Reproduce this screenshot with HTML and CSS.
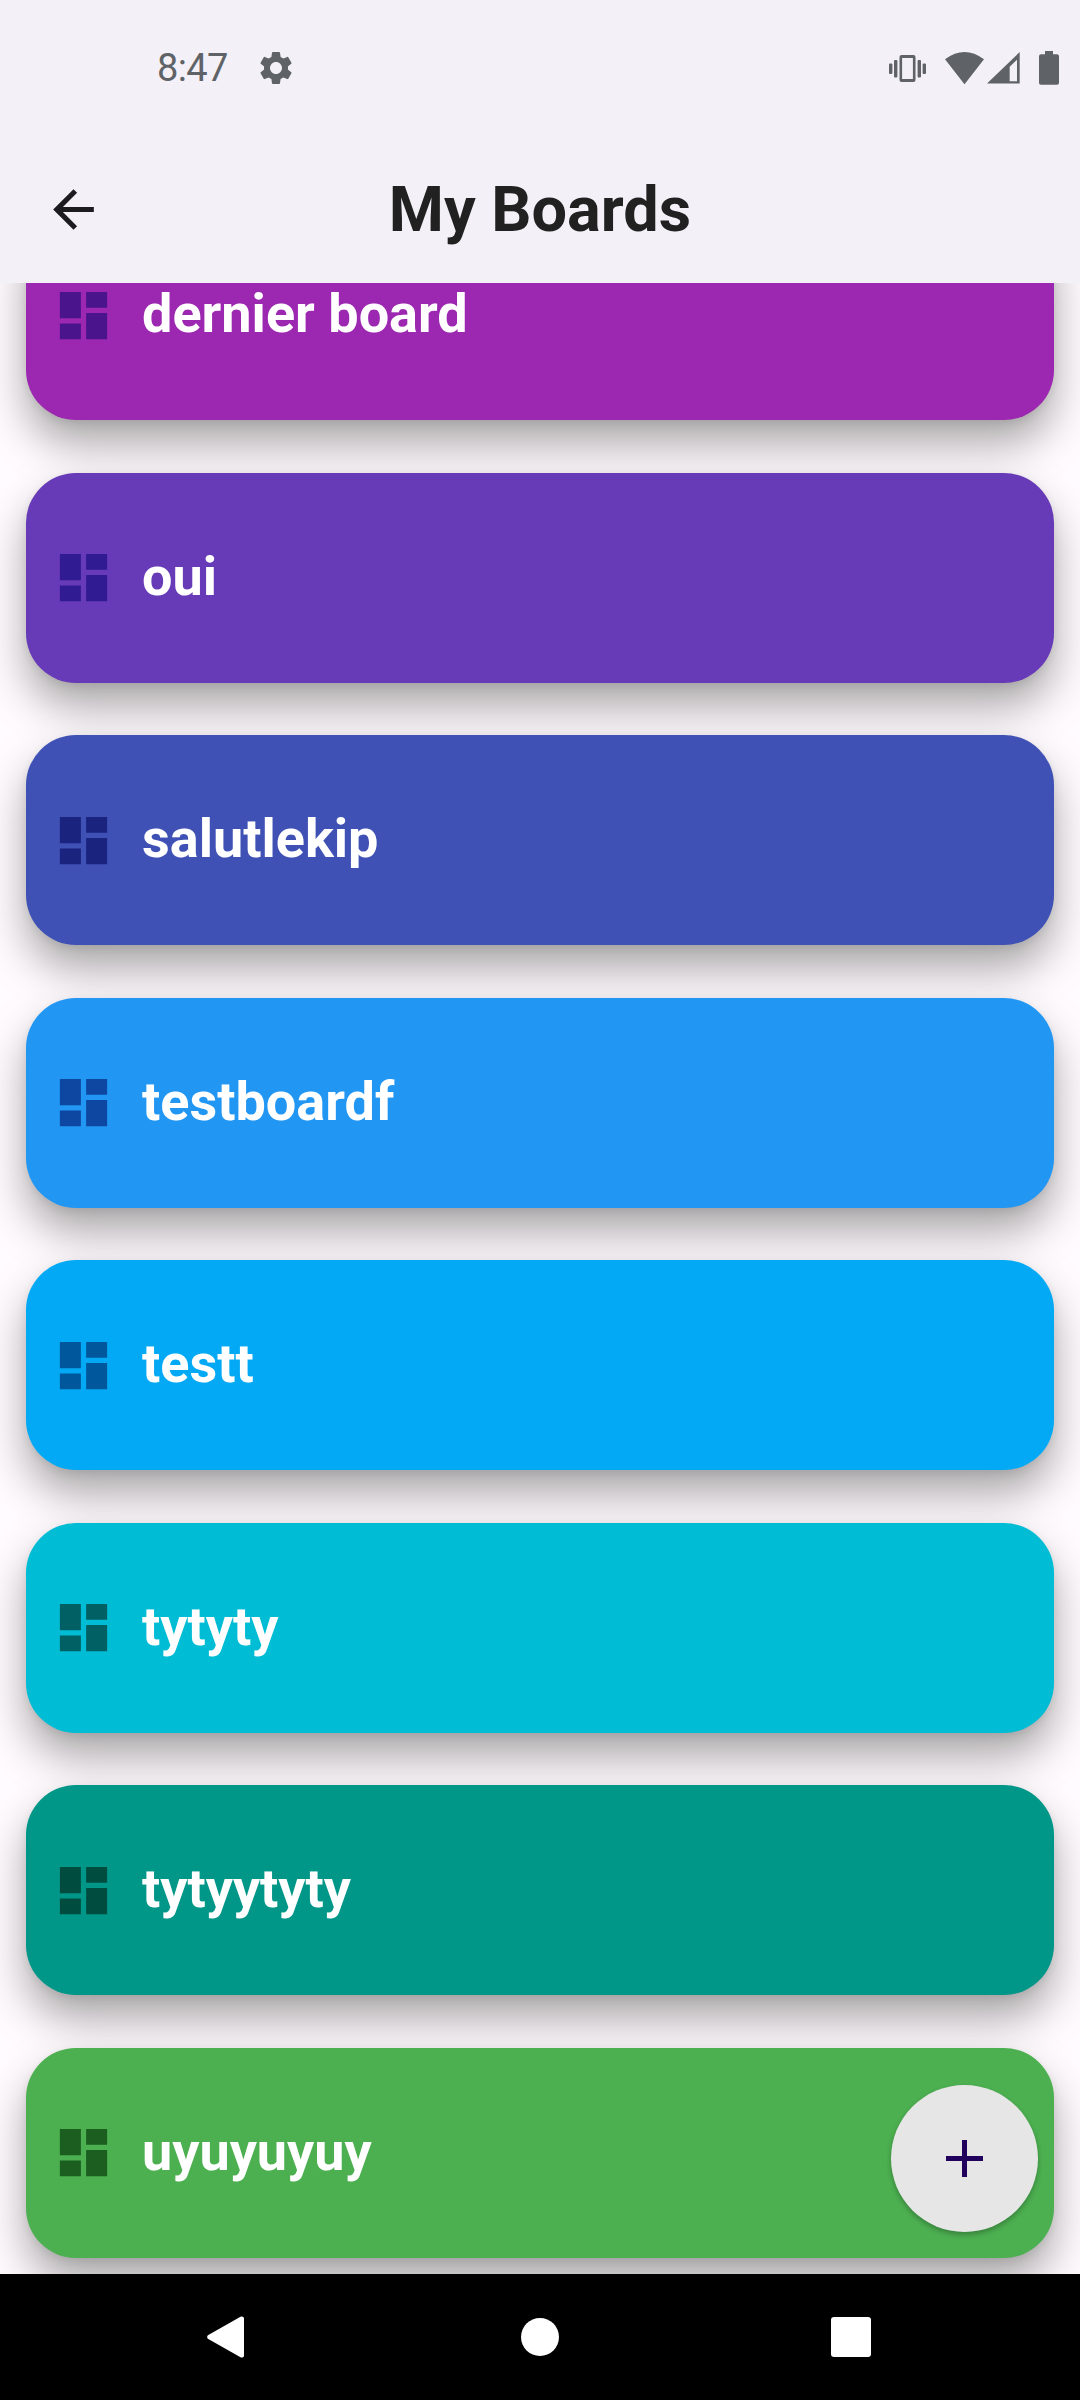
FILE: index.html
```html
<!DOCTYPE html>
<html lang="en">
<head>
    <meta charset="UTF-8">
    <meta name="viewport" content="width=device-width, initial-scale=1.0">
    <title>My Boards</title>
    <link rel="stylesheet" href="styles.css">
</head>
<body>
    <svg class="icon-defs" width="0" height="0">
        <symbol id="dashboard" viewBox="0 0 24 24">
            <path d="M3 13h8V3H3v10zm0 8h8v-6H3v6zm10 0h8V11h-8v10zm0-18v6h8V3h-8z"/>
        </symbol>
    </svg>

    <div class="screen">
        <header class="top">
            <div class="status-bar">
                <span class="time">8:47</span>
                <svg class="gear" viewBox="0 0 24 24"><path d="M19.14 12.94c.04-.3.06-.61.06-.94 0-.32-.02-.64-.07-.94l2.03-1.58c.18-.14.23-.41.12-.61l-1.92-3.32c-.12-.22-.37-.29-.59-.22l-2.39.96c-.5-.38-1.03-.7-1.62-.94l-.36-2.54c-.04-.24-.24-.41-.48-.41h-3.84c-.24 0-.43.17-.47.41l-.36 2.54c-.59.24-1.13.57-1.62.94l-2.39-.96c-.22-.08-.47 0-.59.22L2.74 8.87c-.12.21-.08.47.12.61l2.03 1.58c-.05.3-.09.63-.09.94s.02.64.07.94l-2.03 1.58c-.18.14-.23.41-.12.61l1.92 3.32c.12.22.37.29.59.22l2.39-.96c.5.38 1.03.7 1.62.94l.36 2.54c.05.24.24.41.48.41h3.84c.24 0 .44-.17.47-.41l.36-2.54c.59-.24 1.13-.56 1.62-.94l2.39.96c.22.08.47 0 .59-.22l1.92-3.32c.12-.22.07-.47-.12-.61l-2.01-1.58zM12 15.6c-1.98 0-3.6-1.62-3.6-3.6s1.62-3.6 3.6-3.6 3.6 1.62 3.6 3.6-1.62 3.6-3.6 3.6z"/></svg>
                <div class="status-icons">
                    <svg class="vibrate" viewBox="0 0 37 27">
                        <rect x="0" y="8.5" width="3.4" height="10.5" rx="1"/>
                        <rect x="5" y="5" width="3.4" height="17.5" rx="1"/>
                        <path fill-rule="evenodd" d="M12.5 0h12a2 2 0 0 1 2 2v23a2 2 0 0 1-2 2h-12a2 2 0 0 1-2-2V2a2 2 0 0 1 2-2zm.6 3v21h10.800V3z"/>
                        <rect x="28.6" y="5" width="3.4" height="17.5" rx="1"/>
                        <rect x="33.6" y="8.5" width="3.4" height="10.5" rx="1"/>
                    </svg>
                    <svg class="wifi" viewBox="0 0 39 32.3"><path d="M0 7.3Q19.5-7.3 39 7.3L19.5 32.3z"/></svg>
                    <svg class="signal" viewBox="0 0 32.7 31.6"><path fill-rule="evenodd" d="M0 31.6 32.7 0v31.6zM22.7 14.8v14.4H30V7.700z"/></svg>
                    <svg class="battery" viewBox="0 0 20 33.7"><path d="M6 0h8v3.3h4a2 2 0 0 1 2 2v26.4a2 2 0 0 1-2 2H2a2 2 0 0 1-2-2V5.3a2 2 0 0 1 2-2h4z"/></svg>
                </div>
            </div>
            <div class="app-bar">
                <svg class="back" viewBox="0 0 24 24"><path d="M20 11H7.83l5.59-5.59L12 4l-8 8 8 8 1.41-1.41L7.83 13H20v-2z"/></svg>
                <h1>My Boards</h1>
                <span class="back-spacer"></span>
            </div>
        </header>

        <main class="list">
            <div class="boards">
                <div class="board purple"><svg class="board-icon"><use href="#dashboard"/></svg><span class="board-name">dernier board</span></div>
                <div class="board deep-purple"><svg class="board-icon"><use href="#dashboard"/></svg><span class="board-name">oui</span></div>
                <div class="board indigo"><svg class="board-icon"><use href="#dashboard"/></svg><span class="board-name">salutlekip</span></div>
                <div class="board blue"><svg class="board-icon"><use href="#dashboard"/></svg><span class="board-name">testboardf</span></div>
                <div class="board light-blue"><svg class="board-icon"><use href="#dashboard"/></svg><span class="board-name">testt</span></div>
                <div class="board cyan"><svg class="board-icon"><use href="#dashboard"/></svg><span class="board-name">tytyty</span></div>
                <div class="board teal"><svg class="board-icon"><use href="#dashboard"/></svg><span class="board-name">tytyytyty</span></div>
                <div class="board green"><svg class="board-icon"><use href="#dashboard"/></svg><span class="board-name">uyuyuyuy</span></div>
            </div>
        </main>

        <button class="fab" type="button">
            <svg viewBox="0 0 37 37"><path d="M16 0h5v16h16v5H21v16h-5V21H0v-5h16z"/></svg>
        </button>

        <nav class="nav-bar">
            <svg class="nav-back" viewBox="0 0 37 42"><path d="M33.5.8 1.3 19a2.3 2.3 0 0 0 0 4l32.2 18.200c1.600.8 3.500 0 3.500-1.800V2.600c0-1.800-1.900-2.600-3.500-1.800z"/></svg>
            <span class="nav-home"></span>
            <span class="nav-square"></span>
        </nav>
    </div>
</body>
</html>
```

FILE: styles.css
```css
* {
    box-sizing: border-box;
}

body {
    margin: 0;
    font-family: Roboto, sans-serif;
    background-color: #fffbfe;
}

.icon-defs {
    position: absolute;
}

.screen {
    position: relative;
    display: flex;
    flex-direction: column;
    width: 1080px;
    height: 2400px;
    overflow: hidden;
}

/* Top area */
.top {
    height: 283px;
    flex-shrink: 0;
    background-color: #f3f0f7;
}

.status-bar {
    display: flex;
    align-items: center;
    height: 136px;
    padding: 0 21px 0 157px;
    color: #5f6368;
}

.status-bar svg {
    fill: #5f6368;
    display: block;
}

.time {
    font-size: 38px;
    font-weight: 400;
    letter-spacing: -0.6px;
}

.gear {
    width: 40px;
    height: 40px;
    margin-left: 28px;
}

.status-icons {
    display: flex;
    align-items: center;
    margin-left: auto;
}

.vibrate {
    width: 37px;
    height: 27px;
}

.wifi {
    width: 39px;
    height: 32.3px;
    margin-left: 19px;
}

.signal {
    width: 32.7px;
    height: 31.6px;
    margin-left: 3px;
}

.battery {
    width: 20px;
    height: 33.7px;
    margin-left: 19px;
}

.app-bar {
    display: flex;
    align-items: center;
    height: 147px;
    padding: 0 41px;
}

.back {
    width: 61px;
    height: 61px;
    margin-left: 2px;
    margin-right: -2px;
    fill: #1c1b1f;
}

.back-spacer {
    width: 61px;
}

h1 {
    flex: 1;
    margin: 0;
    font-size: 63px;
    font-weight: 700;
    text-align: center;
    color: #212121;
}

/* Board list */
.list {
    flex: 1;
    overflow: hidden;
}

.boards {
    display: flex;
    flex-direction: column;
    gap: 52.5px;
    margin-top: -73px;
    padding: 0 26px;
}

.board {
    display: flex;
    align-items: center;
    flex-shrink: 0;
    height: 210px;
    padding-left: 26px;
    border-radius: 50px;
    font-size: 54px;
    font-weight: 700;
    color: #fff;
    box-shadow: 0 24px 44px rgba(0, 0, 0, 0.34), 0 3px 8px rgba(0, 0, 0, 0.08);
}

.board-icon {
    width: 63px;
    height: 63px;
    margin-right: 27px;
    fill: currentColor;
}

.board-name {
    margin-bottom: 3px;
}

.purple { background-color: #9c27b0; }
.purple .board-icon { color: #4a148c; }
.deep-purple { background-color: #673ab7; }
.deep-purple .board-icon { color: #311b92; }
.indigo { background-color: #3f51b5; }
.indigo .board-icon { color: #1a237e; }
.blue { background-color: #2196f3; }
.blue .board-icon { color: #0d47a1; }
.light-blue { background-color: #03a9f4; }
.light-blue .board-icon { color: #01579b; }
.cyan { background-color: #00bcd4; }
.cyan .board-icon { color: #006064; }
.teal { background-color: #009688; }
.teal .board-icon { color: #004d40; }
.green { background-color: #4caf50; }
.green .board-icon { color: #1b5e20; }

/* Add button */
.fab {
    position: absolute;
    right: 42px;
    bottom: 168px;
    display: flex;
    align-items: center;
    justify-content: center;
    width: 147px;
    height: 147px;
    padding: 0;
    border: none;
    border-radius: 50%;
    background-color: #e6e6e6;
    box-shadow: 0 3px 5px rgba(0, 0, 0, 0.25);
}

.fab svg {
    width: 37px;
    height: 37px;
    fill: #21005d;
}

/* System navigation */
.nav-bar {
    display: flex;
    align-items: center;
    flex-shrink: 0;
    height: 126px;
    padding-left: 207px;
    background-color: #000;
}

.nav-back {
    width: 37px;
    height: 42px;
    fill: #fff;
}

.nav-home {
    width: 38px;
    height: 38px;
    margin-left: 277px;
    border-radius: 50%;
    background-color: #fff;
}

.nav-square {
    width: 40px;
    height: 40px;
    margin-left: 272px;
    border-radius: 3px;
    background-color: #fff;
}
```
